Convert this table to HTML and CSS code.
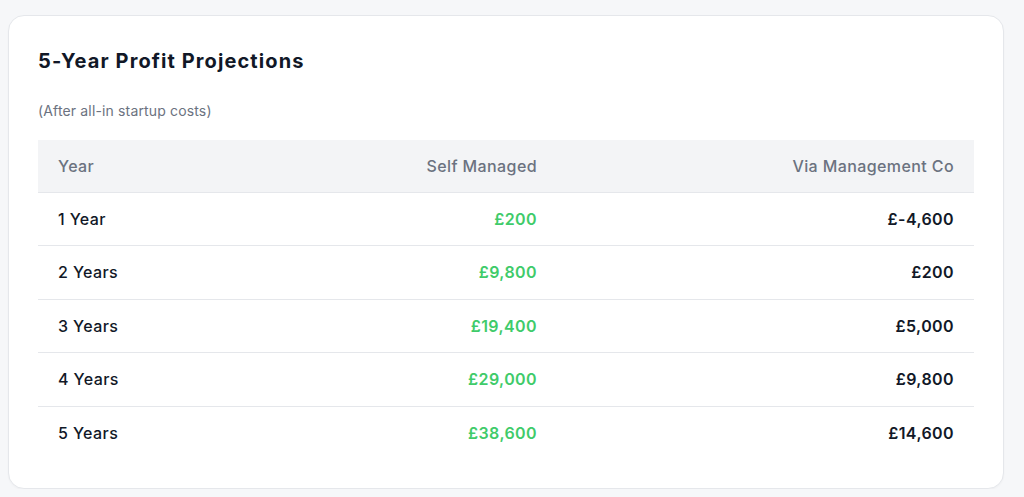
FILE: index.html
```html
<!DOCTYPE html>
<html lang="en">
<head>
    <meta charset="UTF-8">
    <meta name="viewport" content="width=device-width, initial-scale=1.0">
    <title>5-Year Profit Projections</title>
    <link rel="stylesheet" href="styles.css">
</head>
<body>

    <div class="card">
        <h2 class="card-title">5-Year Profit Projections</h2>
        <p class="card-note">(After all-in startup costs)</p>

        <table class="projections">
            <colgroup>
                <col class="col-year">
                <col class="col-self">
                <col class="col-co">
            </colgroup>
            <thead>
                <tr>
                    <th>Year</th>
                    <th class="num">Self Managed</th>
                    <th class="num">Via Management Co</th>
                </tr>
            </thead>
            <tbody>
                <tr>
                    <td>1 Year</td>
                    <td class="num good">£200</td>
                    <td class="num">£-4,600</td>
                </tr>
                <tr>
                    <td>2 Years</td>
                    <td class="num good">£9,800</td>
                    <td class="num">£200</td>
                </tr>
                <tr>
                    <td>3 Years</td>
                    <td class="num good">£19,400</td>
                    <td class="num">£5,000</td>
                </tr>
                <tr>
                    <td>4 Years</td>
                    <td class="num good">£29,000</td>
                    <td class="num">£9,800</td>
                </tr>
                <tr>
                    <td>5 Years</td>
                    <td class="num good">£38,600</td>
                    <td class="num">£14,600</td>
                </tr>
            </tbody>
        </table>
    </div>

</body>
</html>
```

FILE: styles.css
```css
* {
    margin: 0;
    padding: 0;
    box-sizing: border-box;
}

body {
    background: #f6f7f9;
    font-family: 'Inter', 'Liberation Sans', sans-serif;
    color: #111827;
    padding: 15px 0 0 8px;
}

.card {
    width: 996px;
    background: #ffffff;
    border: 1px solid #e5e7eb;
    border-radius: 16px;
    padding: 29px 29px 28px 29px;
    box-shadow: 0 1px 2px rgba(0, 0, 0, 0.03);
}

.card-title {
    font-family: 'Inter', sans-serif;
    font-size: 20px;
    font-weight: 700;
    line-height: 28px;
    letter-spacing: 1.1px;
    color: #111827;
    margin-top: 2px;
}

.card-note {
    font-size: 14px;
    line-height: 20px;
    letter-spacing: 0.15px;
    color: #6b7280;
    margin-top: 26px;
    margin-bottom: 19px;
}

.projections {
    width: 936px;
    border-collapse: collapse;
    font-size: 16px;
    letter-spacing: 0.4px;
}

.col-year {
    width: 260px;
}

.col-self {
    width: 259px;
}

.col-co {
    width: 417px;
}

.projections th {
    background: #f3f4f6;
    color: #6b7280;
    font-weight: 500;
    text-align: left;
    height: 52px;
    padding: 0 20px;
    border-bottom: 1px solid #e5e7eb;
}

.projections td {
    height: 53.5px;
    padding: 0 20px;
    font-weight: 500;
    border-bottom: 1px solid #e5e7eb;
}

.projections tbody tr:last-child td {
    border-bottom: none;
}

.projections .num {
    text-align: right;
}

.projections td.num {
    font-weight: 600;
}

.projections td.good {
    color: #3fcb6a;
}
```
